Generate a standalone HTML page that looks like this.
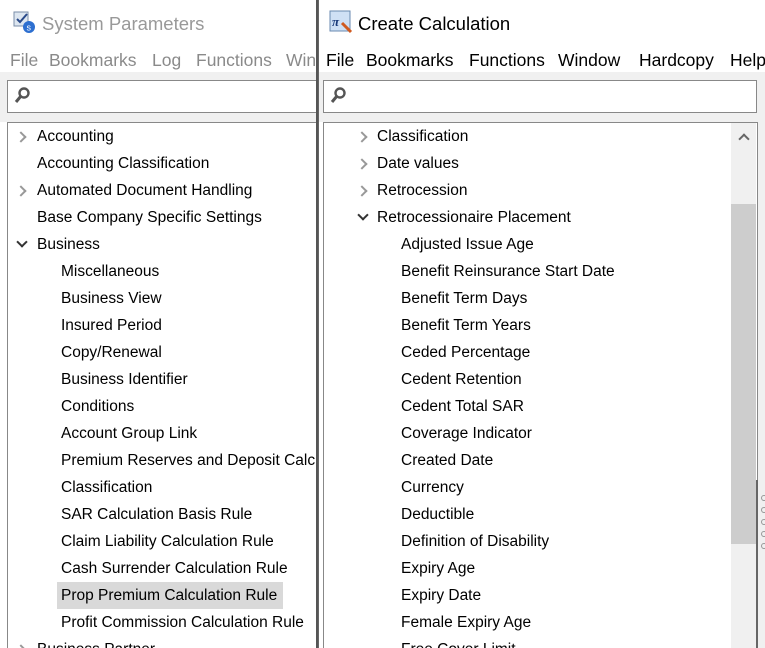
<!DOCTYPE html><html><head><style>
*{margin:0;padding:0;box-sizing:border-box}
html,body{width:765px;height:648px;overflow:hidden}
body{position:relative;background:#fff;font-family:"Liberation Sans",sans-serif;}
.a{position:absolute}
.t{position:absolute;font-size:15.5px;color:#000;white-space:nowrap;line-height:20px}
.m{position:absolute;top:50px;font-size:17.5px;white-space:nowrap}
.ar{position:absolute;width:8px;height:8px;border-right:2px solid #999;border-bottom:2px solid #999;transform:rotate(-45deg)}
.dn{position:absolute;width:8px;height:8px;border-right:2px solid #333;border-bottom:2px solid #333;transform:rotate(45deg)}
</style></head><body>
<div class="a" style="left:0;top:0;width:318px;height:648px;background:#fff"></div>
<div class="a" style="left:0;top:72px;width:318px;height:50px;background:#f0f0f0"></div>
<svg class="a" style="left:13px;top:10px" width="24" height="24"><rect x="1" y="2" width="14" height="14" fill="#dde6f0" stroke="#7a8ea8"/><path d="M4 9l3 3 7-8" stroke="#2a4a8a" stroke-width="2" fill="none"/><circle cx="16" cy="17" r="6" fill="#2d6fd0"/><text x="13.5" y="20.5" font-size="9" fill="#fff" font-family="Liberation Sans">s</text></svg>
<div class="a" style="left:42px;top:13px;font-size:18.5px;color:#999">System Parameters</div>
<div style="color:#8a8a8a">
<span class="m" style="left:10px">File</span><span class="m" style="left:49px">Bookmarks</span><span class="m" style="left:152px">Log</span><span class="m" style="left:196px">Functions</span><span class="m" style="left:286px">Win</span></div>
<div class="a" style="left:7px;top:80px;width:320px;height:33px;background:#fff;border:1px solid #888"></div>
<svg class="a" style="left:13px;top:86px" width="20" height="20"><circle cx="11" cy="7" r="4.5" stroke="#555" stroke-width="2.4" fill="none"/><path d="M8 10l-5 6" stroke="#555" stroke-width="3"/></svg>
<div class="a" style="left:7px;top:122px;width:320px;height:530px;border:1px solid #888;background:#fff"></div>
<div class="a" style="left:57px;top:582px;width:226px;height:27px;background:#d9d9d9"></div>
<div id="L"></div>
<div class="a" style="left:317px;top:0;width:448px;height:648px;background:#fff;border-left:2px solid #666"></div>
<div class="a" style="left:319px;top:72px;width:446px;height:50px;background:#f0f0f0"></div>
<div class="a" style="left:757px;top:72px;width:8px;height:576px;background:#f0f0f0"></div>
<svg class="a" style="left:329px;top:10px" width="26" height="26"><rect x="1" y="1" width="20" height="20" fill="#cfe0f5" stroke="#6a8ab0"/><text x="3" y="16" font-size="13" font-style="italic" font-weight="bold" fill="#1a3a7a" font-family="Liberation Serif">π</text><path d="M13 13l9 9" stroke="#d05a20" stroke-width="3"/></svg>
<div class="a" style="left:358px;top:13px;font-size:18.5px;color:#000">Create Calculation</div>
<div style="color:#000">
<span class="m" style="left:326px">File</span><span class="m" style="left:366px">Bookmarks</span><span class="m" style="left:469px">Functions</span><span class="m" style="left:558px">Window</span><span class="m" style="left:639px">Hardcopy</span><span class="m" style="left:730px">Help</span></div>
<div class="a" style="left:323px;top:80px;width:434px;height:33px;background:#fff;border:1px solid #888"></div>
<svg class="a" style="left:329px;top:86px" width="20" height="20"><circle cx="11" cy="7" r="4.5" stroke="#555" stroke-width="2.4" fill="none"/><path d="M8 10l-5 6" stroke="#555" stroke-width="3"/></svg>
<div class="a" style="left:323px;top:122px;width:435px;height:530px;border:1px solid #888;background:#fff"></div>
<div class="a" style="left:731px;top:123px;width:25px;height:525px;background:#f0f0f0"></div>
<div class="a" style="left:731px;top:204px;width:25px;height:340px;background:#cdcdcd"></div>
<div class="a" style="left:740px;top:135px;width:8px;height:8px;border-left:2px solid #666;border-top:2px solid #666;transform:rotate(45deg)"></div>
<div class="a" style="left:756px;top:480px;width:2px;height:168px;background:#666"></div>
<svg class="a" style="left:759px;top:495px" width="6" height="60"><g fill="none" stroke="#999"><circle cx="5" cy="3" r="2.5"/><circle cx="5" cy="15" r="2.5"/><circle cx="5" cy="27" r="2.5"/><circle cx="5" cy="39" r="2.5"/><circle cx="5" cy="51" r="2.5"/></g></svg>
<div id="R"></div>
<script>
function add(id,items,xa,xt,xc){let h='';items.forEach((it,i)=>{let y=127+i*27;let [k,s]=it;let x=k==0?xc:xt;
if(k==1)h+=`<div class="ar" style="left:${xa}px;top:${y+6}px"></div>`;
if(k==2)h+=`<div class="dn" style="left:${xa+1}px;top:${y+3}px"></div>`;
h+=`<div class="t" style="left:${x}px;top:${y}px">${s}</div>`;});
document.getElementById(id).innerHTML=h;}
add('L',[[1,'Accounting'],[3,'Accounting Classification'],[1,'Automated Document Handling'],[3,'Base Company Specific Settings'],[2,'Business'],[0,'Miscellaneous'],[0,'Business View'],[0,'Insured Period'],[0,'Copy/Renewal'],[0,'Business Identifier'],[0,'Conditions'],[0,'Account Group Link'],[0,'Premium Reserves and Deposit Calc'],[0,'Classification'],[0,'SAR Calculation Basis Rule'],[0,'Claim Liability Calculation Rule'],[0,'Cash Surrender Calculation Rule'],[0,'Prop Premium Calculation Rule'],[0,'Profit Commission Calculation Rule'],[1,'Business Partner']],17,37,61);
add('R',[[1,'Classification'],[1,'Date values'],[1,'Retrocession'],[2,'Retrocessionaire Placement'],[0,'Adjusted Issue Age'],[0,'Benefit Reinsurance Start Date'],[0,'Benefit Term Days'],[0,'Benefit Term Years'],[0,'Ceded Percentage'],[0,'Cedent Retention'],[0,'Cedent Total SAR'],[0,'Coverage Indicator'],[0,'Created Date'],[0,'Currency'],[0,'Deductible'],[0,'Definition of Disability'],[0,'Expiry Age'],[0,'Expiry Date'],[0,'Female Expiry Age'],[0,'Free Cover Limit']],358,377,401);
</script>
<div class="a" style="left:316px;top:0;width:2px;height:648px;background:#555"></div>
</body></html>
